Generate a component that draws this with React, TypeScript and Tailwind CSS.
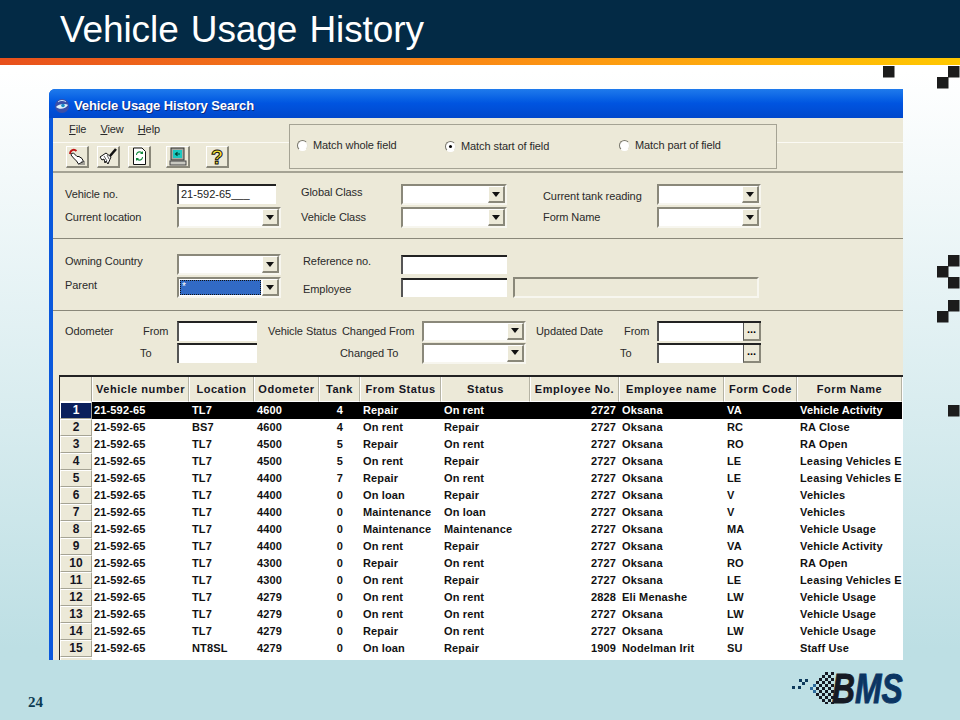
import type { ReactNode } from "react";

const COLS = "grid grid-cols-[32px_97px_65px_65px_41px_81px_89px_89px_105px_73px_105px]";

const HEADERS = ["Vehicle number", "Location", "Odometer", "Tank", "From Status", "Status", "Employee No.", "Employee name", "Form Code", "Form Name"];

const ROWS = [
  ["21-592-65", "TL7", "4600", "4", "Repair", "On rent", "2727", "Oksana", "VA", "Vehicle Activity"],
  ["21-592-65", "BS7", "4600", "4", "On rent", "Repair", "2727", "Oksana", "RC", "RA Close"],
  ["21-592-65", "TL7", "4500", "5", "Repair", "On rent", "2727", "Oksana", "RO", "RA Open"],
  ["21-592-65", "TL7", "4500", "5", "On rent", "Repair", "2727", "Oksana", "LE", "Leasing Vehicles E"],
  ["21-592-65", "TL7", "4400", "7", "Repair", "On rent", "2727", "Oksana", "LE", "Leasing Vehicles E"],
  ["21-592-65", "TL7", "4400", "0", "On loan", "Repair", "2727", "Oksana", "V", "Vehicles"],
  ["21-592-65", "TL7", "4400", "0", "Maintenance", "On loan", "2727", "Oksana", "V", "Vehicles"],
  ["21-592-65", "TL7", "4400", "0", "Maintenance", "Maintenance", "2727", "Oksana", "MA", "Vehicle Usage"],
  ["21-592-65", "TL7", "4400", "0", "On rent", "Repair", "2727", "Oksana", "VA", "Vehicle Activity"],
  ["21-592-65", "TL7", "4300", "0", "Repair", "On rent", "2727", "Oksana", "RO", "RA Open"],
  ["21-592-65", "TL7", "4300", "0", "On rent", "Repair", "2727", "Oksana", "LE", "Leasing Vehicles E"],
  ["21-592-65", "TL7", "4279", "0", "On rent", "On rent", "2828", "Eli Menashe", "LW", "Vehicle Usage"],
  ["21-592-65", "TL7", "4279", "0", "On rent", "On rent", "2727", "Oksana", "LW", "Vehicle Usage"],
  ["21-592-65", "TL7", "4279", "0", "Repair", "On rent", "2727", "Oksana", "LW", "Vehicle Usage"],
  ["21-592-65", "NT8SL", "4279", "0", "On loan", "Repair", "1909", "Nodelman Irit", "SU", "Staff Use"],
];

function Label({ children, className = "" }: { children: ReactNode; className?: string }) {
  return <span className={`text-[11px] leading-none tracking-[-0.08px] text-[#2a2a2a] whitespace-nowrap ${className}`}>{children}</span>;
}

function Input({ w, value, className = "h-[20px]" }: { w: string; value?: string; className?: string }) {
  return (
    <div className={`${w} ${className} bg-white border-t-2 border-l-2 border-t-[#222] border-l-[#555] pl-[2px] text-[11px] leading-[17px] text-[#222]`}>
      {value}
    </div>
  );
}

function Arrow() {
  return (
    <div className="w-[17px] h-[17px] shrink-0 bg-[#ECE9D8] border-r-2 border-b-2 border-r-[#8a887a] border-b-[#8a887a] border-t border-l border-t-white border-l-white flex items-center justify-center">
      <svg width="8" height="5" viewBox="0 0 8 5"><path d="M0 0h8L4 5z" fill="#111" /></svg>
    </div>
  );
}

function Combo({ w, selected }: { w: string; selected?: boolean }) {
  return (
    <div className={`${w} h-[21px] flex items-end bg-white border-2 border-t-[#8a887a] border-l-[#8a887a] border-r-[#f7f6ef] border-b-[#f7f6ef]`}>
      <div className="flex-1 h-full">
        {selected && (
          <div className="h-[15px] m-[1px] bg-[#316AC5] border border-dotted border-[#111] text-white text-[10px] leading-[12px] pl-[1px]">*</div>
        )}
      </div>
      <Arrow />
    </div>
  );
}

function DateBox() {
  return (
    <div className="w-[104px] h-[20px] flex bg-white border-t-2 border-l-2 border-t-[#222] border-l-[#555]">
      <div className="flex-1" />
      <div className="w-[18px] bg-[#ECE9D8] border-l border-l-[#555] border-r-2 border-b-2 border-r-[#8a887a] border-b-[#8a887a] text-[11px] font-bold leading-[12px] text-center text-black">...</div>
    </div>
  );
}

function Radio({ checked }: { checked?: boolean }) {
  return (
    <span className="w-[11px] h-[11px] shrink-0 rounded-full bg-white border border-t-[#77756a] border-l-[#77756a] border-r-[#e5e3d6] border-b-white flex items-center justify-center">
      {checked && <span className="w-[3px] h-[3px] rounded-full bg-black" />}
    </span>
  );
}

function ToolButton({ children, className = "" }: { children: ReactNode; className?: string }) {
  return (
    <div className={`w-[23px] h-[22px] bg-[#ECE9D8] border-t border-l border-t-white border-l-white border-r-2 border-b-2 border-r-[#8a887a] border-b-[#8a887a] flex items-center justify-center ${className}`}>
      {children}
    </div>
  );
}

function HandIcon() {
  return (
    <svg width="19" height="18" viewBox="0 0 19 18">
      <path d="M2 6C2 2 6 0.500 8.500 3" fill="none" stroke="#c01818" strokeWidth="1.8" />
      <path d="M3.500 5.500l2-.5 3.500 3.500 2 0 3 2 1.500 3-5 2.500-2-3-3-3-2.500-3z" fill="#fff" stroke="#111" strokeWidth="1" />
      <path d="M10 16h7M13 14h4" stroke="#555" strokeWidth="1" />
    </svg>
  );
}

function BroomIcon() {
  return (
    <svg width="19" height="18" viewBox="0 0 19 18">
      <path d="M11 8l6-7" stroke="#111" strokeWidth="2.6" />
      <path d="M1 9l6-4 5 4-3 7-2-3-1 2-1-4-2 1z" fill="#fff" stroke="#111" strokeWidth="1" />
      <path d="M5 8l3 5M8 7l2 4" stroke="#333" strokeWidth="0.8" />
    </svg>
  );
}

function DocIcon() {
  return (
    <svg width="15" height="19" viewBox="0 0 15 19">
      <path d="M1.500 1h8.500l3.500 3.500v13h-12z" fill="#fff" stroke="#111" strokeWidth="1" />
      <path d="M5 8c0-2 2-3 4-2l-1 1h3V4L10 5C7 3 4 5 4 8z" fill="#128a3c" />
      <path d="M10 10c0 2-2 3-4 2l1-1H4v3l1-1c3 2 6 0 6-3z" fill="#128a3c" />
    </svg>
  );
}

function ComputerIcon() {
  return (
    <svg width="18" height="19" viewBox="0 0 18 19">
      <rect x="2" y="1" width="13" height="12" fill="#a9a9a0" stroke="#333" strokeWidth="1" />
      <rect x="4" y="3" width="9" height="8" fill="#18c8c0" />
      <path d="M11 7H7M8.500 5.300L6.500 7l2 1.700" stroke="#043" strokeWidth="1.200" fill="none" />
      <rect x="1" y="14" width="16" height="4" fill="#c8c8c0" stroke="#444" strokeWidth="1" />
    </svg>
  );
}

function HelpIcon() {
  return (
    <svg width="16" height="19" viewBox="0 0 16 19">
      <text x="8" y="16.500" textAnchor="middle" fontSize="20" fontWeight="700" fontFamily="'Liberation Sans', sans-serif" fill="#ffe830" stroke="#111" strokeWidth="1">?</text>
    </svg>
  );
}

function AppIcon() {
  return (
    <svg width="16" height="16" viewBox="0 0 16 16">
      <circle cx="8" cy="8" r="7" fill="#3b4fa8" />
      <path d="M2 9c2-3 9-4 12-2-2 4-9 5-12 2z" fill="#dff2fa" />
      <circle cx="9" cy="7.500" r="1.800" fill="#1b8fc8" />
      <path d="M4 4c2-2 6-2 8 0" stroke="#cfe6f7" strokeWidth="1" fill="none" />
    </svg>
  );
}

function Deco() {
  const squares = [
    [883, 66], [948, 66], [937, 77],
    [948, 255], [937, 266], [948, 277],
    [948, 300], [937, 311],
    [948, 405],
  ];
  return (
    <svg className="absolute inset-0 pointer-events-none" width="960" height="720" viewBox="0 0 960 720">
      {squares.map(([x, y]) => <rect key={`${x}-${y}`} x={x} y={y} width="11.500" height="11.500" fill="#1c1c1c" />)}
    </svg>
  );
}

function LogoChecker() {
  const cells: [number, number, string][] = [];
  for (let cx = 0; cx < 9; cx++) {
    for (let cy = 0; cy < 11; cy++) {
      if ((cx + cy) % 2 === 0 && Math.abs(cy - 5) <= cx * 0.8 + 0.5) {
        cells.push([cx, cy, cx < 3 ? "#2c6a9c" : "#161a24"]);
      }
    }
  }
  return (
    <svg width="44" height="32" viewBox="0 0 44 32" className="shrink-0">
      <rect x="0" y="14" width="3" height="3" fill="#0d3a5c" />
      <rect x="6" y="14" width="3" height="3" fill="#0d3a5c" />
      <rect x="7" y="7" width="3" height="3" fill="#0d3a5c" />
      <rect x="10" y="10" width="3" height="3" fill="#0d3a5c" />
      <rect x="13" y="7" width="3" height="3" fill="#0d3a5c" />
      {cells.map(([cx, cy, c]) => (
        <rect key={`${cx}-${cy}`} x={15 + cx * 3} y={cy * 3} width="3" height="3" fill={c} />
      ))}
    </svg>
  );
}

export default function App() {
  return (
    <div className="relative w-[960px] h-[720px] overflow-hidden flex flex-col bg-gradient-to-b from-white from-[10%] to-[#BDDFE4] to-[90%] font-['Liberation_Sans',Arial,sans-serif]">
      {/* Slide header */}
      <div className="h-[58px] shrink-0 bg-[#032A45] pl-[60px] pt-[9px]">
        <h1 className="text-[37px] leading-[42px] text-white font-normal tracking-[-0.1px] [word-spacing:2px]">Vehicle Usage History</h1>
      </div>
      <div className="h-[7px] shrink-0 bg-gradient-to-r from-[#E8501C] via-[#FA8A14] to-[#FFC800]" />

      <div className="flex-1 min-h-0 pl-[49px] pt-[24px]">
        {/* Application window */}
        <div className="w-[854px] h-[571px] overflow-hidden flex flex-col bg-[#0A58DC] rounded-tl-[6px]">
          <div className="h-[29px] shrink-0 flex items-center gap-[4px] pl-[5px] pt-[4px] bg-gradient-to-b from-[#1F7AEC] via-[#0054E0] to-[#0048CC]">
            <AppIcon />
            <span className="text-[13px] font-bold text-white tracking-[-0.1px] [text-shadow:1px_1px_0_#0A2A80]">Vehicle Usage History Search</span>
          </div>

          <div className="flex-1 min-h-0 ml-[4px] bg-[#ECE9D8] flex flex-col">
            {/* Menu, toolbar and match options */}
            <div className="h-[53px] shrink-0 flex">
              <div className="w-[236px] flex flex-col">
                <div className="h-[25px] flex gap-[14px] pl-[16px] pt-[6px] border-b border-b-[#fbfaf4]">
                  <Label><u>F</u>ile</Label>
                  <Label><u>V</u>iew</Label>
                  <Label><u>H</u>elp</Label>
                </div>
                <div className="flex pl-[13px] pt-[3px]">
                  <ToolButton><HandIcon /></ToolButton>
                  <ToolButton className="ml-[8px]"><BroomIcon /></ToolButton>
                  <ToolButton className="ml-[8px]"><DocIcon /></ToolButton>
                  <ToolButton className="ml-[15px] w-[24px]"><ComputerIcon /></ToolButton>
                  <ToolButton className="ml-[16px]"><HelpIcon /></ToolButton>
                </div>
              </div>
              <div className="w-[488px] h-[45px] mt-[6px] border border-[#a5a394] flex items-start pl-[7px] pt-[15px]">
                <div className="w-[148px] flex items-center gap-[5px]"><Radio /><Label>Match whole field</Label></div>
                <div className="w-[174px] flex items-center gap-[5px] mt-[1px]"><Radio checked /><Label>Match start of field</Label></div>
                <div className="flex items-center gap-[5px]"><Radio /><Label>Match part of field</Label></div>
              </div>
              <div className="flex-1 h-[25px] border-b border-b-[#fbfaf4]" />
            </div>

            {/* Vehicle fields */}
            <div className="h-[68px] shrink-0 border-t-2 border-t-[#a5a394] border-b border-b-[#8a887a] pl-[12px] pt-[11px] flex flex-col gap-[2px]">
              <div className="flex items-center h-[21px]">
                <Label className="w-[112px]">Vehicle no.</Label>
                <div className="w-[124px] pb-[2px]"><Input w="w-[99px]" value="21-592-65___" /></div>
                <Label className="w-[100px] pb-[4px]">Global Class</Label>
                <div className="w-[142px]"><Combo w="w-[106px]" /></div>
                <Label className="w-[114px] pt-[3px]">Current tank reading</Label>
                <Combo w="w-[104px]" />
              </div>
              <div className="flex items-center h-[21px]">
                <Label className="w-[112px]">Current location</Label>
                <div className="w-[124px]"><Combo w="w-[104px]" /></div>
                <Label className="w-[100px]">Vehicle Class</Label>
                <div className="w-[142px]"><Combo w="w-[106px]" /></div>
                <Label className="w-[114px]">Form Name</Label>
                <Combo w="w-[104px]" />
              </div>
            </div>

            {/* Ownership fields */}
            <div className="h-[72px] shrink-0 border-b border-b-[#8a887a] pl-[12px] pt-[15px] flex flex-col gap-[2px]">
              <div className="flex items-center h-[21px]">
                <Label className="w-[112px] pb-[7px]">Owning Country</Label>
                <div className="w-[126px]"><Combo w="w-[104px]" /></div>
                <Label className="w-[98px] pb-[7px]">Reference no.</Label>
                <Input w="w-[106px]" className="h-[19px]" />
              </div>
              <div className="flex items-center h-[21px]">
                <Label className="w-[112px] pb-[5px]">Parent</Label>
                <div className="w-[126px]"><Combo w="w-[104px]" selected /></div>
                <Label className="w-[98px] pt-[3px]">Employee</Label>
                <Input w="w-[106px]" className="h-[19px]" />
                <div className="ml-[6px] w-[246px] h-[21px] border-2 border-t-[#8a887a] border-l-[#8a887a] border-r-[#f7f6ef] border-b-[#f7f6ef]" />
              </div>
            </div>

            {/* Odometer, status and date fields */}
            <div className="h-[61px] shrink-0 pl-[12px] pt-[10px] flex flex-col gap-[2px]">
              <div className="flex items-center h-[20px]">
                <Label className="w-[78px]">Odometer</Label>
                <Label className="w-[34px]">From</Label>
                <div className="w-[91px]"><Input w="w-[80px]" /></div>
                <Label className="w-[74px]">Vehicle Status</Label>
                <Label className="w-[80px]">Changed From</Label>
                <div className="w-[114px]"><Combo w="w-[104px]" /></div>
                <Label className="w-[88px]">Updated Date</Label>
                <Label className="w-[33px]">From</Label>
                <DateBox />
              </div>
              <div className="flex items-center h-[20px]">
                <Label className="w-[112px] pl-[75px]">To</Label>
                <div className="w-[163px]"><Input w="w-[80px]" /></div>
                <Label className="w-[82px]">Changed To</Label>
                <div className="w-[198px]"><Combo w="w-[104px]" /></div>
                <Label className="w-[37px]">To</Label>
                <DateBox />
              </div>
            </div>

            {/* Results grid */}
            <div className="flex-1 min-h-0 ml-[6px] mt-[3px] border-t-2 border-l border-t-[#222] border-l-[#222] bg-white overflow-hidden">
              <div className={COLS}>
                <div className="h-[25px] bg-[#ECE9D8] border-r border-b border-r-[#a5a394] border-b-[#fff]" />
                {HEADERS.map((h) => (
                  <div key={h} className="h-[25px] bg-[#ECE9D8] border-l border-r border-b border-l-white border-r-[#b5b3a4] border-b-[#fff] text-[11px] font-bold tracking-[0.55px] leading-[24px] text-center text-[#15151f] whitespace-nowrap">
                    {h}
                  </div>
                ))}
              </div>
              {ROWS.map((r, i) => {
                const sel = i === 0;
                const cell = `h-[17px] text-[11px] font-bold tracking-[0.15px] leading-[16px] whitespace-nowrap ${sel ? "bg-black text-white" : "bg-white text-[#111]"}`;
                return (
                  <div key={i} className={COLS}>
                    <div className={`h-[17px] border-t border-l border-t-white border-l-white border-r border-b border-r-[#a5a394] border-b-[#a5a394] text-[12px] font-bold leading-[15px] text-center ${sel ? "bg-[#0A1F5C] text-white" : "bg-[#ECE9D8] text-[#15151f]"}`}>
                      {i + 1}
                    </div>
                    <div className={`${cell} pl-[2px]`}>{r[0]}</div>
                    <div className={`${cell} pl-[3px]`}>{r[1]}</div>
                    <div className={`${cell} pl-[3px]`}>{r[2]}</div>
                    <div className={`${cell} pr-[17px] text-right`}>{r[3]}</div>
                    <div className={`${cell} pl-[3px]`}>{r[4]}</div>
                    <div className={`${cell} pl-[3px]`}>{r[5]}</div>
                    <div className={`${cell} pr-[3px] text-right`}>{r[6]}</div>
                    <div className={`${cell} pl-[3px]`}>{r[7]}</div>
                    <div className={`${cell} pl-[3px]`}>{r[8]}</div>
                    <div className={`${cell} pl-[3px]`}>{r[9]}</div>
                  </div>
                );
              })}
              <div className={COLS}>
                <div className="h-[17px] bg-[#ECE9D8] border-t border-l border-white" />
              </div>
            </div>
          </div>
        </div>
      </div>

      {/* Slide footer */}
      <div className="h-[60px] shrink-0 flex pl-[28px] pr-[58px] bg-[#BDDFE4]">
        <span className="mt-[34px] font-['Liberation_Serif',serif] text-[15px] leading-[16px] font-bold text-[#0C3A52]">24</span>
        <div className="ml-auto mt-[12px] w-[110px] h-[32px] flex">
          <LogoChecker />
          <span className="-ml-[4px] block origin-left scale-x-[0.74] font-['Liberation_Sans',sans-serif] italic font-bold text-[43px] leading-[32px] whitespace-nowrap text-[#0B3563] [-webkit-text-stroke:1px_currentColor]">
            <span className="text-[#161a24]">B</span>MS
          </span>
        </div>
      </div>

      <Deco />
    </div>
  );
}
